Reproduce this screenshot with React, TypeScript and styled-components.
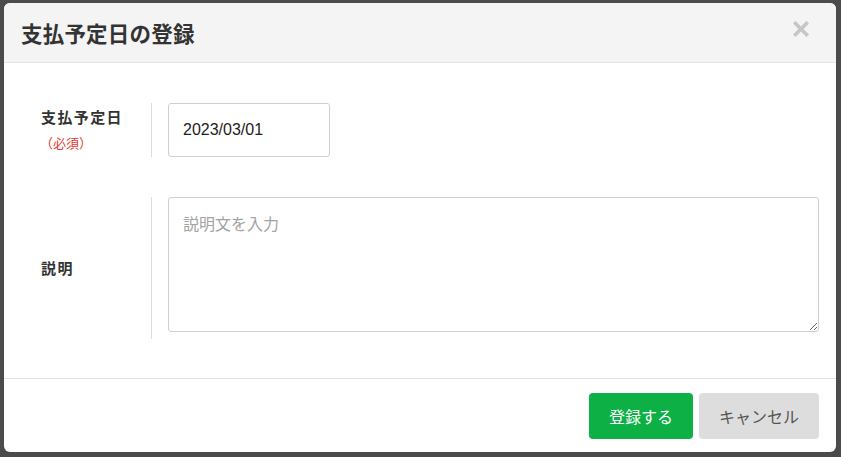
import React from 'react';
import styled, { createGlobalStyle } from 'styled-components';

const GlobalStyle = createGlobalStyle`
  html, body {
    margin: 0;
    padding: 0;
    background: #4b4b4b;
  }
  body {
    font-family: "Liberation Sans", "Noto Sans CJK JP", sans-serif;
    color: #333;
  }
`;

export default function App() {
  return (
    <>
      <GlobalStyle />
      <Overlay>
        <Dialog>
          <Header>
            <Title>支払予定日の登録</Title>
            <CloseButton aria-label="閉じる">
              <svg width="16" height="16" viewBox="0 0 16 16">
                <path d="M2.5 2.5 L13.5 13.5 M13.5 2.5 L2.5 13.5" stroke="#c6c6c6" strokeWidth="3.6" strokeLinecap="square" />
              </svg>
            </CloseButton>
          </Header>

          <Body>
            <Row>
              <LabelCell>
                <Label>支払予定日</Label>
                <Required>（必須）</Required>
              </LabelCell>
              <FieldCell>
                <DateInput defaultValue="2023/03/01" />
              </FieldCell>
            </Row>
            <Row>
              <LabelCell>
                <Label>説明</Label>
              </LabelCell>
              <FieldCell>
                <TextArea placeholder="説明文を入力" />
              </FieldCell>
            </Row>
          </Body>

          <Footer>
            <Button $variant="primary">登録する</Button>
            <Button>キャンセル</Button>
          </Footer>
        </Dialog>
      </Overlay>
    </>
  );
}

const Overlay = styled.div`
  width: 841px;
  height: 457px;
  box-sizing: border-box;
  padding: 3px 5px 5px 4px;
`;

const Dialog = styled.div`
  width: 832px;
  height: 449px;
  background: #fff;
  border-radius: 6px;
  overflow: hidden;
  display: flex;
  flex-direction: column;
`;

const Header = styled.div`
  height: 59px;
  flex-shrink: 0;
  background: #f4f4f4;
  border-bottom: 1px solid #e3e3e3;
  display: flex;
  align-items: center;
  justify-content: space-between;
  padding: 0 27px 0 17px;
`;

const Title = styled.h1`
  margin: 0;
  font-family: "Noto Sans CJK JP", sans-serif;
  font-size: 21.5px;
  font-weight: 700;
  color: #333;
  letter-spacing: 0.2px;
`;

const CloseButton = styled.button`
  border: none;
  background: none;
  padding: 0;
  margin-top: -8px;
  display: flex;
  cursor: pointer;
`;

const Body = styled.div`
  flex: 1;
  display: flex;
  flex-direction: column;
  gap: 40px;
  padding: 40px 17px 39px 0;
  border-bottom: 1px solid #e3e3e3;
`;

const Row = styled.div`
  display: flex;
  align-items: stretch;
`;

const LabelCell = styled.div`
  width: 110px;
  flex-shrink: 0;
  padding-left: 37px;
  border-right: 1px solid #dcdcdc;
  display: flex;
  flex-direction: column;
  justify-content: center;
  gap: 6px;
`;

const Label = styled.div`
  font-family: "Noto Sans CJK JP", sans-serif;
  font-size: 15px;
  font-weight: 700;
  letter-spacing: 1.4px;
  color: #333;
  line-height: 20px;
`;

const Required = styled.div`
  font-family: "Noto Sans CJK JP", sans-serif;
  font-size: 13px;
  color: #e53a2f;
  line-height: 20px;
  margin-left: -1px;
`;

const FieldCell = styled.div`
  flex: 1;
  padding-left: 16px;
  display: flex;
  flex-direction: column;
`;

const DateInput = styled.input`
  box-sizing: border-box;
  width: 162px;
  height: 54px;
  border: 1px solid #cfcfcf;
  border-radius: 3px;
  padding: 0 14px;
  font-family: "Liberation Sans", "Noto Sans CJK JP", sans-serif;
  font-size: 16px;
  color: #222;
  outline: none;
`;

const TextArea = styled.textarea`
  box-sizing: border-box;
  width: 100%;
  height: 135px;
  margin-bottom: 7px;
  border: 1px solid #cfcfcf;
  border-radius: 3px;
  padding: 13px 14px;
  font-family: "Noto Sans CJK JP", sans-serif;
  font-size: 16px;
  color: #333;
  outline: none;
  resize: both;

  &::placeholder {
    color: #a3a3a3;
  }
`;

const Footer = styled.div`
  display: flex;
  justify-content: flex-end;
  gap: 6px;
  padding: 14px 17px 14px 0;
`;

const Button = styled.button<{ $variant?: 'primary' }>`
  height: 46px;
  border: none;
  border-radius: 4px;
  padding: 0 20px;
  font-family: "Noto Sans CJK JP", sans-serif;
  font-size: 16px;
  cursor: pointer;
  background: ${p => (p.$variant === 'primary' ? '#0cb044' : '#dddddd')};
  color: ${p => (p.$variant === 'primary' ? '#fff' : '#555')};
`;
